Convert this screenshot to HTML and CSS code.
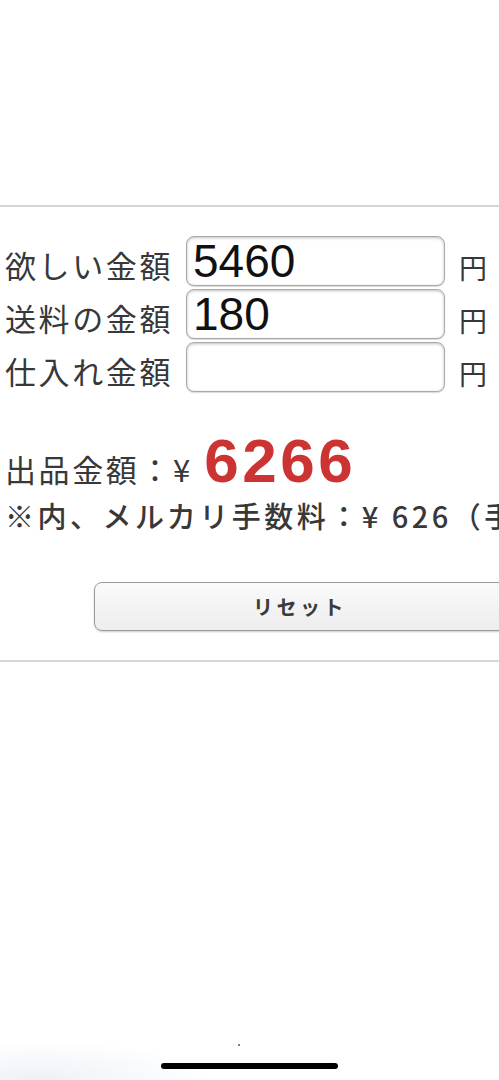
FILE: index.html
```html
<!DOCTYPE html>
<html lang="ja">
<head>
<meta charset="utf-8">
<title>メルカリ 出品金額計算</title>
<link rel="stylesheet" href="styles.css">
</head>
<body>
<div class="page">
  <div class="top-space"></div>
  <hr class="rule">
  <section class="calc">
    <div class="row">
      <label class="label">欲しい金額</label>
      <input class="field" type="text" value="5460">
      <span class="unit">円</span>
    </div>
    <div class="row">
      <label class="label">送料の金額</label>
      <input class="field" type="text" value="180">
      <span class="unit">円</span>
    </div>
    <div class="row">
      <label class="label">仕入れ金額</label>
      <input class="field" type="text" value="">
      <span class="unit">円</span>
    </div>
    <div class="result">
      <p class="price">出品金額：¥ <span class="amount">6266</span></p>
      <p class="fee">※内、メルカリ手数料：¥ 626（手数料率10%）</p>
    </div>
    <div class="actions">
      <button class="reset" type="button">リセット</button>
    </div>
  </section>
  <hr class="rule">
</div>
<div class="home-glow"></div>
<div class="home-dot"></div>
<div class="home-bar"></div>
</body>
</html>
```

FILE: styles.css
```css
html, body {
  margin: 0;
  padding: 0;
  background: #ffffff;
  overflow: hidden;
}
body {
  width: 499px;
  height: 1080px;
  position: relative;
  font-family: "Noto Sans CJK JP", "Liberation Sans", sans-serif;
  color: #383838;
}
.page {
  width: 499px;
  overflow: hidden;
}
.top-space {
  height: 205px;
}
.rule {
  margin: 0;
  border: 0;
  border-top: 2px solid #d6d6d6;
  height: 0;
}
.calc {
  padding: 29px 0 29px 5px;
  display: flex;
  flex-direction: column;
  gap: 3px;
}
.row {
  display: flex;
  align-items: center;
  height: 50px;
}
.label {
  width: 181px;
  flex: none;
  font-size: 31px;
  letter-spacing: 2.6px;
  white-space: nowrap;
  line-height: 1;
  margin-top: 6px;
}
.field {
  box-sizing: border-box;
  width: 259px;
  height: 50px;
  flex: none;
  border: 1.5px solid #a9a9a9;
  border-radius: 8px;
  background: #ffffff;
  box-shadow: inset 0 1px 3px rgba(0, 0, 0, 0.25), 0 1px 1px rgba(0, 0, 0, 0.15);
  font-family: "Liberation Sans", Arial, sans-serif;
  font-size: 46px;
  color: #111111;
  padding: 0 0 0 6px;
  line-height: 48px;
  outline: none;
}
.unit {
  margin-left: 14px;
  font-size: 28px;
  line-height: 1;
  margin-top: 12px;
  flex: none;
}
.result {
  margin-top: 40px;
  white-space: nowrap;
}
.price {
  margin: 0;
  font-size: 31px;
  letter-spacing: 2.6px;
  line-height: 52px;
}
.amount {
  font-family: "Liberation Sans", Arial, sans-serif;
  font-weight: 700;
  font-size: 62px;
  letter-spacing: 3.5px;
  color: #cc3333;
  line-height: 52px;
  margin-left: 2px;
}
.fee {
  margin: 0;
  font-size: 29px;
  font-weight: 500;
  letter-spacing: 3.5px;
  line-height: 40px;
  white-space: nowrap;
}
.actions {
  margin-top: 44px;
  padding-left: 89px;
  white-space: nowrap;
}
.reset {
  box-sizing: border-box;
  width: 412px;
  height: 49px;
  border: 1.5px solid #9a9a9a;
  border-radius: 8px;
  background: linear-gradient(#fafafa, #ededed);
  box-shadow: 0 1px 2px rgba(0, 0, 0, 0.2);
  font-family: "Noto Sans CJK JP", sans-serif;
  font-size: 20px;
  font-weight: 700;
  letter-spacing: 3.5px;
  color: #3a3a3a;
  padding: 0;
}
.home-glow {
  position: absolute;
  left: 0;
  bottom: 0;
  width: 499px;
  height: 60px;
  background: radial-gradient(ellipse 170px 40px at 40px 60px, rgba(225, 232, 242, 0.6), rgba(255, 255, 255, 0));
}
.home-dot {
  position: absolute;
  left: 238px;
  top: 1044px;
  width: 2px;
  height: 2px;
  border-radius: 50%;
  background: #555;
}
.home-bar {
  position: absolute;
  left: 161px;
  top: 1063px;
  width: 177px;
  height: 6px;
  border-radius: 3px;
  background: #000000;
}
```
